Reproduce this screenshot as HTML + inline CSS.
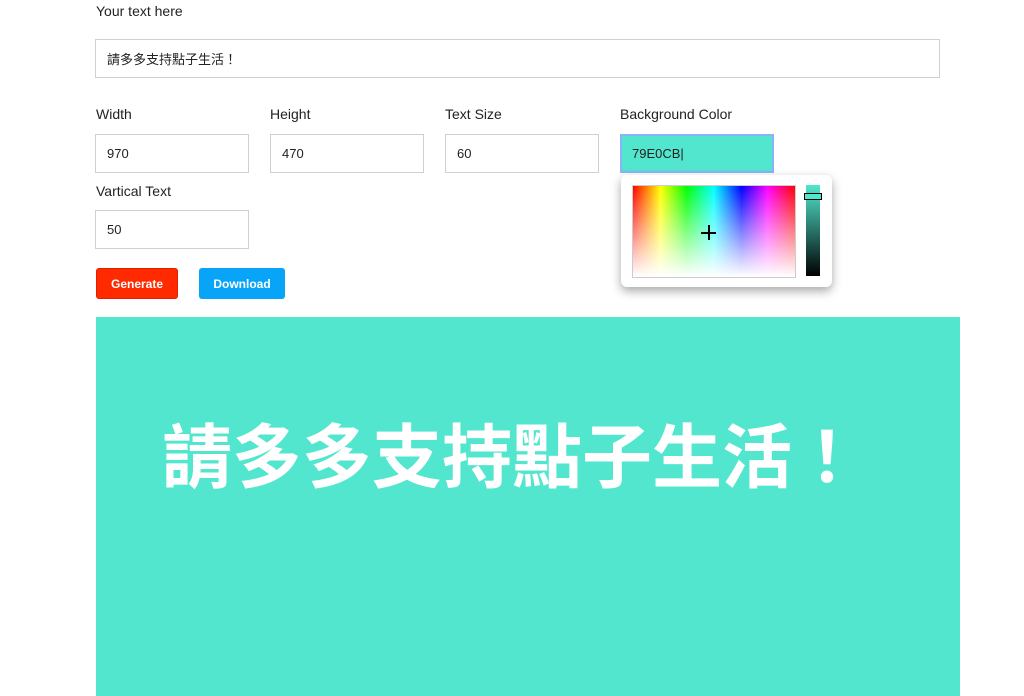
<!DOCTYPE html>
<html><head><meta charset="utf-8"><style>
body{margin:0;width:1024px;height:696px;overflow:hidden;background:#fff;font-family:"Liberation Sans","Noto Sans CJK TC",sans-serif;color:#222;position:relative}
.l{position:absolute;font-size:14px;color:#222}
.i{position:absolute;box-sizing:border-box;border:1px solid #d0d0d0;background:#fff;font-size:13px;padding-left:11px;display:flex;align-items:center;height:39px}
.b{position:absolute;top:268px;height:31px;border-radius:3px;color:#fff;font-size:12px;font-weight:bold;display:flex;align-items:center;justify-content:center;box-sizing:border-box}
</style></head><body>
<div class="l" style="left:96px;top:3px">Your text here</div>
<div class="i" style="left:95px;top:39px;width:845px">請多多支持點子生活！</div>
<div class="l" style="left:96px;top:106px">Width</div>
<div class="l" style="left:270px;top:106px">Height</div>
<div class="l" style="left:445px;top:106px">Text Size</div>
<div class="l" style="left:620px;top:106px">Background Color</div>
<div class="i" style="left:95px;top:134px;width:154px">970</div>
<div class="i" style="left:270px;top:134px;width:154px">470</div>
<div class="i" style="left:445px;top:134px;width:154px">60</div>
<div class="i" style="left:620px;top:134px;width:154px;background:#52E6CE;border:2px solid #8ab4f8;padding-left:10px">79E0CB|</div>
<div class="l" style="left:96px;top:183px">Vartical Text</div>
<div class="i" style="left:95px;top:210px;width:154px">50</div>
<div class="b" style="left:96px;width:82px;background:#ff2a00;border:1px solid #e02000">Generate</div>
<div class="b" style="left:199px;width:86px;background:#08a4f8">Download</div>
<div style="position:absolute;left:96px;top:317px;width:864px;height:379px;background:#52E6CE"></div>
<div style="position:absolute;left:96px;top:408px;width:864px;text-align:center;color:#fff;font-size:70px;font-weight:bold;line-height:90px;font-family:'Noto Sans CJK TC',sans-serif"><span style="margin-left:-32px">請多多支持點子生活！</span></div>
<div style="position:absolute;left:621px;top:175px;width:211px;height:112px;background:#fff;border-radius:6px;box-shadow:0 4px 10px rgba(0,0,0,.35)">
 <div style="position:absolute;left:11px;top:10px;width:162px;height:91px;border:1px solid #ccc;background:linear-gradient(to bottom,rgba(255,255,255,0),#fff),linear-gradient(to right,#f00,#ff0 17%,#0f0 33%,#0ff 50%,#00f 67%,#f0f 83%,#f00)"></div>
 <div style="position:absolute;left:80px;top:57px;width:15px;height:1.5px;background:#000"></div>
 <div style="position:absolute;left:87px;top:50px;width:1.5px;height:15px;background:#000"></div>
 <div style="position:absolute;left:185px;top:10px;width:14px;height:91px;background:linear-gradient(#52E6CE,#000)"></div>
 <div style="position:absolute;left:183px;top:18px;width:16px;height:5px;border:1.5px solid #000;background:#52E6CE"></div>
</div>
</body></html>
